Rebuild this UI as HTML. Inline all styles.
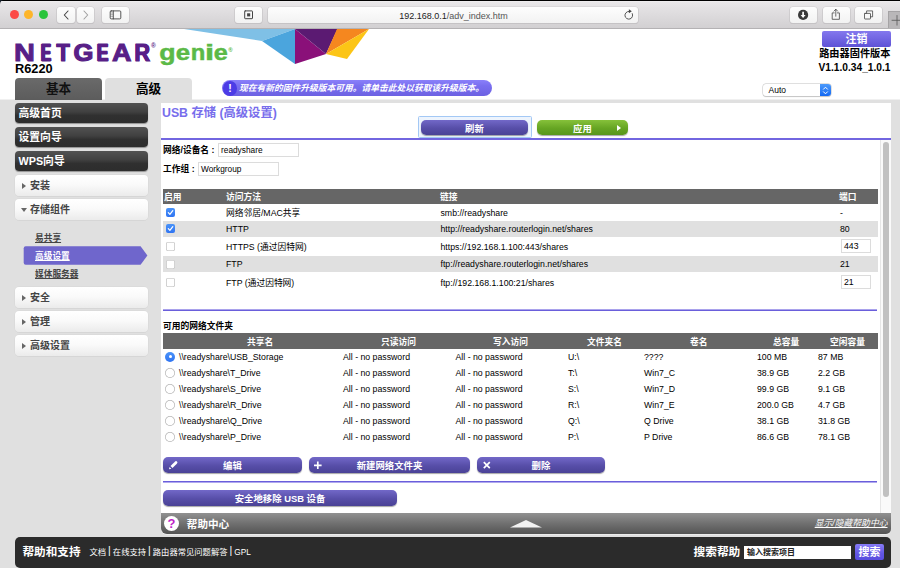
<!DOCTYPE html>
<html lang="zh-CN"><head><meta charset="utf-8"><title>NETGEAR genie</title>
<style>
*{box-sizing:border-box;margin:0;padding:0}
html,body{width:900px;height:568px;overflow:hidden;background:#fff}
body{position:relative;font-family:"Liberation Sans","Noto Sans CJK SC",sans-serif;font-size:9px;color:#000}
.abs{position:absolute}
/* browser chrome */
#chrome{left:0;top:0;width:900px;height:29px;background:linear-gradient(#000 0,#000 1px,#f3f2f3 1px,#e9e7e9 2px,#e3e1e3 8px,#d2d0d2 28px,#b4b2b4 28px,#b4b2b4 29px)}
.tl{width:9px;height:9px;border-radius:50%;top:10.300px}
.cb{top:7px;height:16px;background:linear-gradient(#fdfdfd,#f2f2f2);border-radius:3px;box-shadow:0 0 0 .5px #cfcdcf,0 .5px .5px .5px #bbb9bb}
/* sidebar */
.sbd{left:15px;width:133px;height:20px;border-radius:4px;background:linear-gradient(#525252,#404040 45%,#303030 62%,#2d2d2d);color:#fff;font-weight:bold;font-size:10.800px;line-height:21px;padding-left:3.500px;box-shadow:0 1px 1px rgba(0,0,0,.35)}
.sbl{left:15px;width:133px;height:20px;border-radius:4px;background:linear-gradient(#fff,#fafafa 45%,#ebebeb);color:#444;font-weight:bold;font-size:10px;line-height:22.500px;padding-left:15px;height:20.500px;box-shadow:0 0 0 .5px #d6d6d6,0 .5px .5px rgba(0,0,0,.08)}
.sbl i{position:absolute;left:7px;top:7.500px;width:0;height:0;border-left:4px solid #666;border-top:3px solid transparent;border-bottom:3px solid transparent}
.sbl i.dn{top:9px;left:6px;border-left:3px solid transparent;border-right:3px solid transparent;border-top:4px solid #666;border-bottom:0}
.sub{left:35px;font-size:8.700px;font-weight:bold;color:#444;text-decoration:underline}
/* tables */
.th{background:#666;color:#fff;font-weight:bold}
.row{left:163px;width:714.700px}
.g{background:#e0e0e0}
.t{white-space:nowrap;line-height:12px;font-size:8.740px}
.btn{height:15px;border-radius:5px;background:linear-gradient(#7268c8,#574ea8 55%,#4a4296);color:#fff;font-weight:bold;font-size:9.400px;line-height:17px;text-align:center;box-shadow:0 1px 1px rgba(0,0,0,.35)}
.cbx{width:8.500px;height:8.500px;border-radius:2px;background:#fff;box-shadow:inset 0 0 0 .6px #b4b4b4;margin:.3px 0 0 .3px}
.cbx.on{background:linear-gradient(#4a93f8,#2f74f2);box-shadow:none;width:9px;height:9px;margin:0}
.rd{width:10px;height:10px;border-radius:50%;background:#fff;box-shadow:inset 0 0 0 .7px #b6b6b6;margin-left:.4px}
.rd.on{background:linear-gradient(#4a93f8,#2f74f2);box-shadow:none}
.rd.on:after{content:"";position:absolute;left:3.300px;top:3.300px;width:3.400px;height:3.400px;border-radius:50%;background:#fff}
.sp{font-weight:normal;font-size:10.500px;position:relative;top:-1px;line-height:1px;margin:0 -.3px}
.lg{left:0;top:0;width:240px;height:30px;font-size:24px;line-height:30px;font-weight:bold;white-space:nowrap}
.lg span{position:absolute;left:0;top:0;transform-origin:0 0;display:block}
.inp{background:#fff;border:1px solid #dcdcdc;font-size:8.300px;line-height:11px;padding-left:2px;white-space:nowrap}
</style></head><body>

<!-- gray body -->
<div class="abs" style="left:0;top:100px;width:900px;height:468px;background:#e0e0e0"></div>
<div class="abs" style="left:0;top:99px;width:900px;height:1px;background:#f0f0f0"></div>

<!-- browser chrome -->
<div id="chrome" class="abs"></div>
<div class="abs tl" style="left:9.800px;background:#fc4a47"></div>
<div class="abs tl" style="left:24.200px;background:#fdb52a"></div>
<div class="abs tl" style="left:38.700px;background:#2ac43c"></div>
<div class="abs cb" style="left:57px;width:18px"></div>
<div class="abs cb" style="left:77px;width:17px"></div>
<div class="abs cb" style="left:102px;width:27px"></div>
<div class="abs cb" style="left:235px;width:27px"></div>
<div class="abs cb" style="left:268px;width:370px"></div>
<div class="abs cb" style="left:790px;width:27px"></div>
<div class="abs cb" style="left:823px;width:27px"></div>
<div class="abs cb" style="left:855px;width:27px"></div>
<div class="abs" style="left:888px;top:11px;width:12px;height:17px;background:#b9b7b9;border-left:1px solid #a5a3a5;border-top:1px solid #a5a3a5"></div>
<svg class="abs" style="left:0;top:0" width="900" height="29" viewBox="0 0 900 29" fill="none" stroke="#444" stroke-width="1.1" stroke-linecap="round" stroke-linejoin="round">
<path d="M0 0H3.500Q0 .8 0 4.500Z" fill="#151c26" stroke="none"/><path d="M68 11 L64.3 15 L68 19"/>
<path d="M84 11 L87.7 15 L84 19" stroke="#a0a0a0"/>
<rect x="110.200" y="10.900" width="10.600" height="8" rx="1" stroke-width="0.9"/><path d="M113.300 10.900V18.900" stroke-width="0.9"/><path d="M111 13H112.600M111 14.700H112.600M111 16.400H112.600" stroke-width="0.4"/>
<rect x="244.700" y="10.900" width="7.800" height="7.800" rx=".5" stroke-width="1"/><rect x="247.100" y="13.300" width="3.100" height="3.100" fill="#444" stroke="none"/>
<path d="M628.800 11.400A3.850 3.850 0 1 0 632.300 13.600" stroke-width="0.9"/><path d="M628.900 9.300L631.800 11.300L628.900 13.200Z" fill="#444" stroke="none"/>
<circle cx="803.100" cy="14.900" r="5.100" fill="#3a3a3a" stroke="none"/><path d="M803.100 11.800V15.500" stroke="#fff" stroke-width="1.700" stroke-linecap="butt"/><path d="M800.600 14.900H805.600L803.100 17.900Z" fill="#fff" stroke="none"/>
<path d="M834.200 12.900H832.200V19.300H839.400V12.900H837.400M835.800 16.200V9.400M834 11.100L835.800 9.200L837.600 11.100" stroke-width="0.8"/>
<rect x="864.500" y="13.400" width="6" height="5.600" rx=".5" stroke-width="0.8"/><path d="M866.600 13.200V10.900H872.600V16.800H870.700" stroke-width="0.8"/>
<path d="M892 20.300H901M897 15.500V25.100" stroke="#555" stroke-width="0.8"/>
</svg>
<div class="abs" style="left:268.500px;top:7.600px;width:370px;height:16px;line-height:16px;text-align:center;font-size:9px;color:#222">192.168.0.1<span style="color:#555">/adv_index.htm</span></div>

<!-- header graphic -->
<svg class="abs" style="left:180px;top:29px" width="200" height="40" viewBox="180 29 200 40">
<polygon points="184,29 295,29 262,41" fill="#7fc0e6"/>
<polygon points="262,41 295,29 295,64" fill="#4ba5dd"/>
<polygon points="295,29 295,64 326,54" fill="#8a1079"/>
<polygon points="295,29 337.500,29 326,54" fill="#5b1a72"/>
<polygon points="337,29 369,29 326,54" fill="#f5871f"/>
<polygon points="369,29 326,54 347,59" fill="#fcc516"/>
</svg>

<!-- logo -->
<div class="abs lg" id="ng" style="color:#581f87"><span style="transform:translate(14.11px,37.18px) scale(1.206,1.022);-webkit-text-stroke:0.9px #581f87">N</span><span style="transform:translate(41.07px,37.43px) scale(0.621,1.005);-webkit-text-stroke:1.2px #581f87;text-shadow:1.61px 0 0 #581f87,-1.61px 0 0 #581f87">E</span><span style="transform:translate(56.44px,37.43px) scale(0.908,1.005);-webkit-text-stroke:1.2px #581f87;text-shadow:0.37px 0 0 #581f87,-0.37px 0 0 #581f87">T</span><span style="transform:translate(73.59px,37.43px) scale(1.064,1.005);-webkit-text-stroke:1.2px #581f87">G</span><span style="transform:translate(96.88px,37.43px) scale(0.710,1.005);-webkit-text-stroke:1.2px #581f87;text-shadow:1.11px 0 0 #581f87,-1.11px 0 0 #581f87">E</span><span style="transform:translate(111.89px,37.26px) scale(1.123,1.016);-webkit-text-stroke:1.0px #581f87">A</span><span style="transform:translate(134.45px,37.35px) scale(0.900,1.011);-webkit-text-stroke:1.1px #581f87;text-shadow:0.45px 0 0 #581f87,-0.45px 0 0 #581f87">R</span></div>
<div class="abs" style="left:151px;top:43.200px;font-size:6.500px;line-height:6px;color:#581f87;font-weight:bold">®</div>
<div class="abs lg" id="gn" style="color:#5bb947"><span style="transform:translate(159.18px,38.41px) scale(1.114,0.950);-webkit-text-stroke:0.5px #5bb947">g</span><span style="transform:translate(175.76px,38.41px) scale(1.075,0.950);-webkit-text-stroke:0.5px #5bb947">e</span><span style="transform:translate(190.68px,38.41px) scale(0.993,0.950);-webkit-text-stroke:0.5px #5bb947">n</span><span style="transform:translate(205.05px,38.41px) scale(1.371,0.950);-webkit-text-stroke:0.5px #5bb947">i</span><span style="transform:translate(213.78px,38.41px) scale(1.050,0.950);-webkit-text-stroke:0.5px #5bb947">e</span></div>
<div class="abs" style="left:228.300px;top:47px;font-size:6px;line-height:6px;color:#5bb947;font-weight:bold">®</div>
<div class="abs" style="left:15px;top:62px;font-size:12.800px;line-height:14px;font-weight:bold">R6220</div>

<!-- top right -->
<div class="abs" style="left:822px;top:31px;width:69px;height:16px;background:linear-gradient(#8478ee,#5e52d6);color:#fff;font-weight:bold;font-size:11px;line-height:16px;text-align:center;border-radius:2px">注销</div>
<div class="abs" style="right:9.500px;top:47px;font-size:10.200px;line-height:14px;font-weight:bold;text-align:right;white-space:nowrap">路由器固件版本<br>V1.1.0.34_1.0.1</div>
<div class="abs" style="left:763px;top:84px;width:68px;height:12px;border-radius:3px;background:#fff;box-shadow:0 0 0 .5px #c4c4c4,0 .5px 1px rgba(0,0,0,.22);font-size:8.500px;line-height:12.500px;padding-left:5.500px">Auto</div>
<div class="abs" style="left:820px;top:84px;width:11px;height:12px;border-radius:0 3px 3px 0;background:linear-gradient(#4d9bfb,#1268f3)"></div>
<svg class="abs" style="left:820px;top:83.500px" width="11" height="13" fill="none" stroke="#fff" stroke-width="1" stroke-linecap="round" stroke-linejoin="round"><path d="M3.500 5.200L5.500 3.200L7.500 5.200M3.500 7.800L5.500 9.800L7.500 7.800"/></svg>

<!-- tabs -->
<div class="abs" style="left:15px;top:78px;width:87px;height:21.500px;border-radius:4px 4px 0 0;background:linear-gradient(#6a6a6a,#5c5c5c);font-size:12.600px;font-weight:bold;line-height:23px;text-align:center;color:#111">基本</div>
<div class="abs" style="left:105px;top:78px;width:87px;height:22px;border-radius:4px 4px 0 0;background:#e0e0e0;font-size:12.600px;font-weight:bold;line-height:23px;text-align:center;color:#000">高级</div>

<!-- notice pill -->
<div class="abs" style="left:222px;top:80px;width:270px;height:16px;border-radius:8px;background:linear-gradient(#8a80fa,#7a6ff0 35%,#6c61e2);color:#fff;font-weight:bold;font-style:italic;font-size:8.750px;line-height:16px;padding-left:17px;white-space:nowrap">现在有新的固件升级版本可用。请单击此处以获取该升级版本。</div>
<div class="abs" style="left:223px;top:81px;width:14px;height:14.500px;border-radius:50%;background:#4c3ce6;color:#fff;font-size:10.500px;font-weight:bold;line-height:14.500px;text-align:center">!</div>

<!-- sidebar -->
<div class="abs sbd" style="top:103px">高级首页</div>
<div class="abs sbd" style="top:127px">设置向导</div>
<div class="abs sbd" style="top:151px">WPS向导</div>
<div class="abs sbl" style="top:175px"><i></i>安装</div>
<div class="abs sbl" style="top:199px"><i class="dn"></i>存储组件</div>
<div class="abs sub" style="top:232px;line-height:12px">易共享</div>
<svg class="abs" style="left:20px;top:244px" width="130" height="24" viewBox="20 244 130 24"><path d="M25.700 246.200H140.600L147.400 255.450L140.600 264.700H25.700Q23.700 264.700 23.700 262.700V248.200Q23.700 246.200 25.700 246.200Z" fill="#6f66cc"/></svg>
<div class="abs sub" style="top:250px;line-height:12px;color:#fff">高级设置</div>
<div class="abs sub" style="top:267.800px;line-height:12px">媒体服务器</div>
<div class="abs sbl" style="top:287px"><i></i>安全</div>
<div class="abs sbl" style="top:311px"><i></i>管理</div>
<div class="abs sbl" style="top:335px"><i></i>高级设置</div>

<!-- content panel -->
<div class="abs" style="left:161px;top:103px;width:730px;height:410px;background:#fff"></div>
<div class="abs" style="left:162px;top:105px;font-size:12.300px;line-height:16px;font-weight:bold;color:#786eec;white-space:nowrap">USB 存储 (高级设置)</div>
<div class="abs" style="left:418px;top:116px;width:113.500px;height:21.500px;border:1.500px solid #a3c8f5;border-radius:1.500px;background:#edf4fd"></div>
<div class="abs btn" style="left:421px;top:119.600px;width:107px">刷新</div>
<div class="abs btn" style="left:537px;top:119.600px;width:91px;background:linear-gradient(#86c13a,#66a523 55%,#58961c)">应用</div>
<div class="abs" style="left:617px;top:124.500px;width:0;height:0;border-left:4px solid #fff;border-top:3px solid transparent;border-bottom:3px solid transparent"></div>
<div class="abs" style="left:161px;top:138px;width:730px;height:2px;background:#7266e0"></div>

<!-- scrollbar -->
<div class="abs" style="left:880px;top:140px;width:11px;height:373px;background:#fafafa;border-left:1px solid #e6e6e6"></div>
<div class="abs" style="left:883px;top:142px;width:5.800px;height:354.500px;border-radius:3px;background:#c1c1c1"></div>

<!-- form -->
<div class="abs t" style="left:163px;top:144px;font-weight:bold">网络/设备名 :</div>
<div class="abs inp" style="left:218px;top:143px;width:81px;height:14px;line-height:12.800px">readyshare</div>
<div class="abs t" style="left:163px;top:163px;font-weight:bold">工作组 :</div>
<div class="abs inp" style="left:198px;top:162px;width:81px;height:14px;line-height:12.800px">Workgroup</div>

<!-- table 1 -->
<div class="abs row th" style="top:189px;height:15px"></div>
<div class="abs row g" style="top:220.500px;height:16px"></div>
<div class="abs row g" style="top:256px;height:16px"></div>
<div class="abs t" style="left:164px;top:191px;color:#fff;font-weight:bold">启用</div>
<div class="abs t" style="left:226px;top:191px;color:#fff;font-weight:bold">访问方法</div>
<div class="abs t" style="left:440px;top:191px;color:#fff;font-weight:bold">链接</div>
<div class="abs t" style="left:839px;top:191px;color:#fff;font-weight:bold">端口</div>

<div class="abs cbx on" style="left:166px;top:208px"></div>
<div class="abs cbx on" style="left:166px;top:224px"></div>
<div class="abs cbx" style="left:166px;top:242px"></div>
<div class="abs cbx" style="left:166px;top:260px"></div>
<div class="abs cbx" style="left:166px;top:278px"></div>
<svg class="abs" style="left:166px;top:208px" width="9" height="26" fill="none" stroke="#fff" stroke-width="1.2" stroke-linecap="round" stroke-linejoin="round"><path d="M2.300 4.700L3.900 6.400L6.800 2.700M2.300 20.700L3.900 22.400L6.800 18.700"/></svg>

<div class="abs t" style="left:226px;top:206.500px">网络邻居/MAC共享</div>
<div class="abs t" style="left:226px;top:222.500px">HTTP</div>
<div class="abs t" style="left:226px;top:240.500px">HTTPS (通过因特网)</div>
<div class="abs t" style="left:226px;top:258px">FTP</div>
<div class="abs t" style="left:226px;top:276.500px">FTP (通过因特网)</div>

<div class="abs t" style="left:440.500px;top:206.500px">smb://readyshare</div>
<div class="abs t" style="left:440.500px;top:222.500px">http://readyshare.routerlogin.net/shares</div>
<div class="abs t" style="left:440.500px;top:240.500px">https://192.168.1.100:443/shares</div>
<div class="abs t" style="left:440.500px;top:258px">ftp://readyshare.routerlogin.net/shares</div>
<div class="abs t" style="left:440.500px;top:276.500px">ftp://192.168.1.100:21/shares</div>

<div class="abs t" style="left:840px;top:206.500px">-</div>
<div class="abs t" style="left:840px;top:222.500px">80</div>
<div class="abs inp" style="left:841px;top:239.400px;width:30.400px;height:14px;font-size:8.700px;line-height:12px">443</div>
<div class="abs t" style="left:840px;top:258px">21</div>
<div class="abs inp" style="left:841px;top:275px;width:30.400px;height:14px;font-size:8.700px;line-height:12px">21</div>

<div class="abs" style="left:163px;top:309px;width:714px;height:2px;background:linear-gradient(#a9a2ec 0,#a9a2ec 1px,#6a5edb 1px)"></div>

<!-- table 2 -->
<div class="abs t" style="left:163px;top:319.500px;font-weight:bold">可用的网络文件夹</div>
<div class="abs row th" style="top:333px;height:16px"></div>
<div class="abs t" style="left:247px;top:335.600px;color:#fff;font-weight:bold">共享名</div>
<div class="abs t" style="left:381px;top:335.600px;color:#fff;font-weight:bold">只读访问</div>
<div class="abs t" style="left:493px;top:335.600px;color:#fff;font-weight:bold">写入访问</div>
<div class="abs t" style="left:587px;top:335.600px;color:#fff;font-weight:bold">文件夹名</div>
<div class="abs t" style="left:690px;top:335.600px;color:#fff;font-weight:bold">卷名</div>
<div class="abs t" style="left:773px;top:335.600px;color:#fff;font-weight:bold">总容量</div>
<div class="abs t" style="left:830px;top:335.600px;color:#fff;font-weight:bold">空闲容量</div>

<div class="abs rd on" style="left:165px;top:351.5px"></div>
<div class="abs t" style="left:179px;top:350.5px">\\readyshare\USB_Storage</div>
<div class="abs t" style="left:343px;top:350.5px">All - no password</div>
<div class="abs t" style="left:455.5px;top:350.5px">All - no password</div>
<div class="abs t" style="left:568px;top:350.5px">U:\</div>
<div class="abs t" style="left:644px;top:350.5px">????</div>
<div class="abs t" style="left:757px;top:350.5px">100 MB</div>
<div class="abs t" style="left:818px;top:350.5px">87 MB</div>
<div class="abs rd" style="left:165px;top:367.5px"></div>
<div class="abs t" style="left:179px;top:366.5px">\\readyshare\T_Drive</div>
<div class="abs t" style="left:343px;top:366.5px">All - no password</div>
<div class="abs t" style="left:455.5px;top:366.5px">All - no password</div>
<div class="abs t" style="left:568px;top:366.5px">T:\</div>
<div class="abs t" style="left:644px;top:366.5px">Win7_C</div>
<div class="abs t" style="left:757px;top:366.5px">38.9 GB</div>
<div class="abs t" style="left:818px;top:366.5px">2.2 GB</div>
<div class="abs rd" style="left:165px;top:383.5px"></div>
<div class="abs t" style="left:179px;top:382.5px">\\readyshare\S_Drive</div>
<div class="abs t" style="left:343px;top:382.5px">All - no password</div>
<div class="abs t" style="left:455.5px;top:382.5px">All - no password</div>
<div class="abs t" style="left:568px;top:382.5px">S:\</div>
<div class="abs t" style="left:644px;top:382.5px">Win7_D</div>
<div class="abs t" style="left:757px;top:382.5px">99.9 GB</div>
<div class="abs t" style="left:818px;top:382.5px">9.1 GB</div>
<div class="abs rd" style="left:165px;top:399.5px"></div>
<div class="abs t" style="left:179px;top:398.5px">\\readyshare\R_Drive</div>
<div class="abs t" style="left:343px;top:398.5px">All - no password</div>
<div class="abs t" style="left:455.5px;top:398.5px">All - no password</div>
<div class="abs t" style="left:568px;top:398.5px">R:\</div>
<div class="abs t" style="left:644px;top:398.5px">Win7_E</div>
<div class="abs t" style="left:757px;top:398.5px">200.0 GB</div>
<div class="abs t" style="left:818px;top:398.5px">4.7 GB</div>
<div class="abs rd" style="left:165px;top:415.5px"></div>
<div class="abs t" style="left:179px;top:414.5px">\\readyshare\Q_Drive</div>
<div class="abs t" style="left:343px;top:414.5px">All - no password</div>
<div class="abs t" style="left:455.5px;top:414.5px">All - no password</div>
<div class="abs t" style="left:568px;top:414.5px">Q:\</div>
<div class="abs t" style="left:644px;top:414.5px">Q Drive</div>
<div class="abs t" style="left:757px;top:414.5px">38.1 GB</div>
<div class="abs t" style="left:818px;top:414.5px">31.8 GB</div>
<div class="abs rd" style="left:165px;top:431.5px"></div>
<div class="abs t" style="left:179px;top:430.5px">\\readyshare\P_Drive</div>
<div class="abs t" style="left:343px;top:430.5px">All - no password</div>
<div class="abs t" style="left:455.5px;top:430.5px">All - no password</div>
<div class="abs t" style="left:568px;top:430.5px">P:\</div>
<div class="abs t" style="left:644px;top:430.5px">P Drive</div>
<div class="abs t" style="left:757px;top:430.5px">86.6 GB</div>
<div class="abs t" style="left:818px;top:430.5px">78.1 GB</div>

<!-- buttons -->
<div class="abs btn" style="left:163px;top:457px;height:15.500px;line-height:17.500px;width:139px">编辑</div>
<div class="abs btn" style="left:309px;top:457px;height:15.500px;line-height:17.500px;width:161px">新建网络文件夹</div>
<div class="abs btn" style="left:477px;top:457px;height:15.500px;line-height:17.500px;width:128px">删除</div>
<svg class="abs" style="left:163px;top:457px" width="450" height="16" fill="none" stroke="#fff" stroke-linecap="round"><path d="M8.500 10L12.300 6.200" stroke-width="2.800" stroke-linecap="butt"/><path d="M12.600 5.900L13 5.500" stroke-width="2.800" stroke-linecap="round"/><path d="M6 12.300L8.300 11.700L6.600 10Z" fill="#fff" stroke="none"/><path d="M151 8.300H158.600M154.800 4.500V12.100" stroke-width="1.700" stroke-linecap="butt"/><path d="M320.800 5.200L326.800 11.200M326.800 5.200L320.800 11.200" stroke-width="1.700" stroke-linecap="butt"/></svg>
<div class="abs" style="left:163px;top:481px;width:714px;height:2px;background:linear-gradient(#6a5edb 0,#6a5edb 1px,#b0a9ee 1px)"></div>
<div class="abs btn" style="left:163px;top:490px;height:15.500px;line-height:17.500px;width:234px">安全地移除 USB 设备</div>

<!-- help center -->
<div class="abs" style="left:161px;top:513px;width:730px;height:21px;border-radius:0 0 5px 6px;background:linear-gradient(#919191,#707070 50%,#545454);box-shadow:0 1px 0 #ececec"></div>
<div class="abs" style="left:164px;top:516px;width:15px;height:15px;border-radius:50%;background:#fff;color:#c01fc9;font-size:13px;font-weight:bold;line-height:15.500px;text-align:center">?</div>
<div class="abs" style="left:186.800px;top:516px;font-size:10.600px;line-height:16px;font-weight:bold;color:#fff;white-space:nowrap">帮助中心</div>
<svg class="abs" style="left:508px;top:517px" width="36" height="12"><polygon points="2,10.500 18,3 34,10.500" fill="#f2f2f2"/></svg>
<div class="abs" style="right:12.500px;top:516.500px;font-size:8.800px;line-height:12px;font-style:italic;color:#fff;text-decoration:underline;white-space:nowrap">显示/隐藏帮助中心</div>

<!-- footer -->
<div class="abs" style="left:15px;top:536.500px;width:876px;height:31px;border-radius:5px 5px 5px 5px;background:#2b2b2b"></div>
<div class="abs" style="left:22.500px;top:544px;font-size:11.600px;line-height:16px;font-weight:bold;color:#fff;white-space:nowrap">帮助和支持</div>
<div class="abs" style="left:89.500px;top:544.500px;font-size:8.300px;line-height:14px;color:#fff;white-space:nowrap">文档 <b class="sp">|</b> 在线支持 <b class="sp">|</b> 路由器常见问题解答 <b class="sp">|</b> GPL</div>
<div class="abs" style="left:693.500px;top:544px;font-size:11.700px;line-height:16px;font-weight:bold;color:#fff;white-space:nowrap">搜索帮助</div>
<div class="abs" style="left:744px;top:545.500px;width:107px;height:13.500px;background:#fff;font-size:8px;font-weight:bold;line-height:13.500px;padding-left:3px;color:#222">输入搜索项目</div>
<div class="abs" style="left:855px;top:544px;width:29px;height:16px;border-radius:2px;background:linear-gradient(#877cf6,#6256e2 60%,#594de0);color:#fff;font-weight:bold;font-size:11px;line-height:16px;text-align:center">搜索</div>

</body></html>
